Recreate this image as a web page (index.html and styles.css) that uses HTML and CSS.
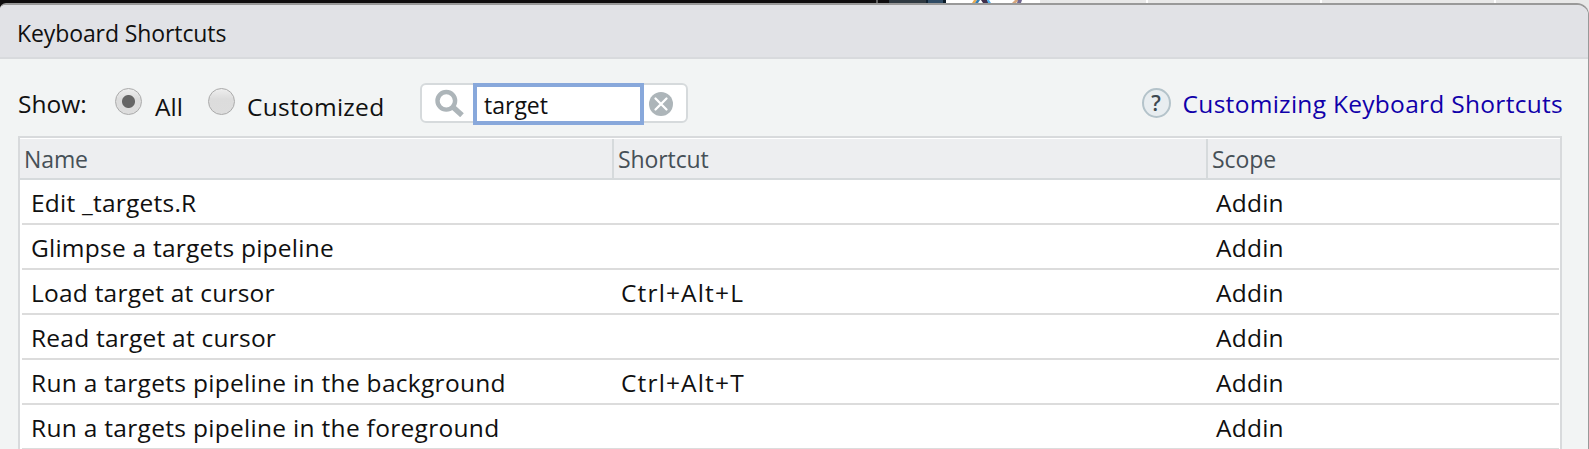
FILE: index.html
```
<!DOCTYPE html>
<html lang="en">
<head>
<meta charset="utf-8">
<title>Keyboard Shortcuts</title>
<link rel="stylesheet" href="styles.css">
</head>
<body>
<svg class="backdrop" width="1589" height="20" viewBox="0 0 1589 20" aria-hidden="true">
  <rect width="1589" height="20" fill="#e8e8e8"/>
  <rect width="889" height="20" fill="#0f0d0e"/>
  <rect x="876" width="2" height="3" fill="#606060"/>
  <rect x="889" width="37" height="3" fill="#303a42"/>
  <rect x="926" width="20" height="3" fill="#304c66"/>
  <rect x="926" width="2" height="3" fill="#10212f"/>
  <rect x="943" width="3" height="3" fill="#0b1b28"/>
  <rect x="946" width="94" height="3" fill="#fff"/>
  <path d="M974 0h3l-2 3h-3z" fill="#e8ac53"/>
  <path d="M977 0h3l-2 3h-3z" fill="#347eb4"/>
  <path d="M981 0h6l2 3h-6z" fill="#40304c"/>
  <path d="M987 0h2l2 3h-3z" fill="#55b5ef"/>
  <path d="M1015 0h4l-3 3h-4z" fill="#d7a77e"/>
  <path d="M1018 0h4l-1 3h-4z" fill="#6f668f"/>
  <rect x="1146" width="2" height="3" fill="#fff"/>
  <rect x="1320" width="2" height="3" fill="#fff"/>
  <rect x="1494" width="2" height="3" fill="#fff"/>
</svg>
<main class="dialog">
  <header class="titlebar"><span>Keyboard Shortcuts</span></header>
  <section class="content">
    <div class="toolbar">
      <span class="show">Show:</span>
      <span class="radio checked"></span><span class="label all">All</span>
      <span class="radio"></span><span class="label custom">Customized</span>
      <div class="search">
        <svg class="magnifier" width="30" height="28" viewBox="0 0 30 28" fill="none" stroke="#adb5b9">
          <circle cx="11.3" cy="11.8" r="8.8" stroke-width="4.4"/>
          <path d="M17.6 17.8L27 26.2" stroke-width="5.4"/>
        </svg>
        <div class="field"><span>target</span></div>
        <svg class="clear" width="24" height="24" viewBox="0 0 24 24">
          <circle cx="12" cy="12" r="12" fill="#adb5b9"/>
          <path d="M6.5 6.5l11 11M17.5 6.5l-11 11" stroke="#fff" stroke-width="2.3" stroke-linecap="round"/>
        </svg>
      </div>
      <div class="help">
        <span class="badge">?</span>
        <a class="link">Customizing Keyboard Shortcuts</a>
      </div>
    </div>
    <div class="table">
      <div class="head"><span>Name</span><span class="divided">Shortcut</span><span class="divided">Scope</span></div>
      <div class="row"><span class="name">Edit _targets.R</span><span></span><span>Addin</span></div>
      <div class="row"><span class="name">Glimpse a targets pipeline</span><span></span><span>Addin</span></div>
      <div class="row"><span class="name">Load target at cursor</span><span class="key">Ctrl+Alt+L</span><span>Addin</span></div>
      <div class="row"><span class="name">Read target at cursor</span><span></span><span>Addin</span></div>
      <div class="row"><span class="name long">Run a targets pipeline in the background</span><span class="key">Ctrl+Alt+T</span><span>Addin</span></div>
      <div class="row"><span class="name long">Run a targets pipeline in the foreground</span><span></span><span>Addin</span></div>
    </div>
  </section>
</main>
</body>
</html>
```
FILE: styles.css
```
* { box-sizing: border-box; }
body {
  margin: 0;
  height: 449px;
  overflow: hidden;
  display: flex;
  flex-direction: column;
  font: 24.5px/32px "Open Sans", "Noto Sans", sans-serif;
  color: #101010;
  white-space: nowrap;
}
.backdrop { display: block; flex: none; margin-bottom: -17px; }
.dialog {
  position: relative;
  height: 460px;
  flex: none;
  background: #f2f4f4;
  border-top: 2px solid #999;
  border-right: 1px solid #999;
  border-radius: 6px 12px 0 0;
  overflow: hidden;
}
.titlebar {
  height: 54px;
  padding: 12px 0 0 17px;
  background: #e1e2e6;
  border-bottom: 2px solid #d8dadd;
  font-size: 23px;
  letter-spacing: -0.1px;
}
.content { padding: 24px 26px 0 18px; }
.toolbar { display: flex; height: 53px; align-items: flex-start; }
.show { width: 97px; padding-top: 5px; }
.radio {
  flex: none;
  width: 27px;
  height: 27px;
  margin-top: 5px;
  border: 1px solid #aaa;
  border-radius: 50%;
  background: linear-gradient(#eee, #dcdcdc 40%, #ddd);
}
.checked { background: radial-gradient(circle, #666 6px, transparent 7px), linear-gradient(#eee, #dcdcdc 40%, #ddd); }
.label { padding-top: 8px; }
.all { width: 66px; padding-left: 13px; }
.custom { width: 185px; padding-left: 12px; letter-spacing: 0.27px; }
.search {
  display: flex;
  flex: none;
  width: 268px;
  height: 40px;
  border: 2px solid #d6dadc;
  border-radius: 6px;
  background: #fff;
}
.magnifier { flex: none; margin: 4px 8px 0 13px; }
.field {
  flex: none;
  width: 171px;
  height: 42px;
  margin: -2px 5px 0 0;
  border: 4px solid #88a8db;
  background: #fff;
  padding: 2px 0 0 7px;
  font-size: 23px;
}
.clear { flex: none; margin-top: 7px; }
.help { display: flex; margin-left: auto; margin-right: -1px; }
.badge {
  width: 29px;
  height: 30px;
  margin: 5px 12px 0 0;
  border: 2px solid #b4c3ca;
  border-radius: 50%;
  background: #e8edf0;
  color: #3c4850;
  font-size: 21px;
  font-weight: 600;
  line-height: 26px;
  text-align: center;
}
.link { color: #1000aa; padding-top: 5px; letter-spacing: 0.29px; }
.table { border: 2px solid #d8dadc; border-bottom: 0; background: #fff; padding-top: 1px; }
.head, .row { display: grid; grid-template-columns: 592px 594px 1fr; }
.head {
  height: 41px;
  background: #edeef0;
  border-bottom: 2px solid #d6dadc;
  color: #465057;
  font-size: 23px;
  letter-spacing: -0.1px;
}
.head span { padding: 4px 0 0 4px; }
.head .divided { border-left: 2px solid #d6dadc; }
.row {
  height: 45px;
  margin: 0 1px 0 2px;
  border-bottom: 2px solid #dcdcdc;
  letter-spacing: 0.23px;
}
.row span { padding: 7px 0 0 8px; }
.row .name { padding-left: 9px; }
.row .long { letter-spacing: 0.3px; }
.row .key { padding-left: 7px; letter-spacing: 1.15px; }
```
